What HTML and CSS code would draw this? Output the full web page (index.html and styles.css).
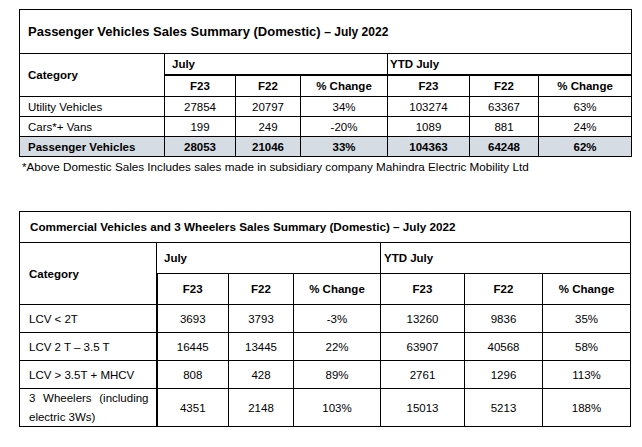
FILE: index.html
```html
<!DOCTYPE html>
<html>
<head>
<meta charset="utf-8">
<link rel="stylesheet" href="styles.css">
</head>
<body>
<div class="page">
  <table class="sales pv">
    <colgroup>
      <col style="width:145px"><col style="width:71px"><col style="width:65px"><col style="width:87px"><col style="width:82px"><col style="width:69px"><col style="width:93px">
    </colgroup>
    <tr class="title-row"><td colspan="7" class="title">Passenger Vehicles Sales Summary (Domestic) <span class="small">– July 2022</span></td></tr>
    <tr class="h1">
      <th rowspan="2" class="cat">Category</th>
      <th colspan="3" class="grp july">July</th>
      <th colspan="3" class="grp ytd">YTD July</th>
    </tr>
    <tr class="h2"><th>F23</th><th>F22</th><th>% Change</th><th>F23</th><th>F22</th><th>% Change</th></tr>
    <tr><td class="name">Utility Vehicles</td><td>27854</td><td>20797</td><td>34%</td><td>103274</td><td>63367</td><td>63%</td></tr>
    <tr><td class="name">Cars*+ Vans</td><td>199</td><td>249</td><td>-20%</td><td>1089</td><td>881</td><td>24%</td></tr>
    <tr class="total"><td class="name">Passenger Vehicles</td><td>28053</td><td>21046</td><td>33%</td><td>104363</td><td>64248</td><td>62%</td></tr>
  </table>
  <p class="note">*Above Domestic Sales Includes sales made in subsidiary company Mahindra Electric Mobility Ltd</p>

  <table class="sales cv">
    <colgroup>
      <col style="width:137px"><col style="width:72px"><col style="width:65px"><col style="width:87px"><col style="width:84px"><col style="width:78px"><col style="width:88px">
    </colgroup>
    <tr class="title-row"><td colspan="7" class="title">Commercial Vehicles and 3 Wheelers Sales Summary (Domestic) – July 2022</td></tr>
    <tr class="h1">
      <th rowspan="2" class="cat">Category</th>
      <th colspan="3" class="grp july">July</th>
      <th colspan="3" class="grp ytd">YTD July</th>
    </tr>
    <tr class="h2"><th class="thick">F23</th><th>F22</th><th>% Change</th><th>F23</th><th>F22</th><th>% Change</th></tr>
    <tr><td class="name">LCV &lt; 2T</td><td class="thick">3693</td><td>3793</td><td>-3%</td><td>13260</td><td>9836</td><td>35%</td></tr>
    <tr><td class="name">LCV 2 T – 3.5 T</td><td class="thick">16445</td><td>13445</td><td>22%</td><td>63907</td><td>40568</td><td>58%</td></tr>
    <tr><td class="name">LCV &gt; 3.5T + MHCV</td><td class="thick">808</td><td>428</td><td>89%</td><td>2761</td><td>1296</td><td>113%</td></tr>
    <tr class="tall"><td class="name wrap">3 Wheelers (including electric 3Ws)</td><td class="thick">4351</td><td>2148</td><td>103%</td><td>15013</td><td>5213</td><td>188%</td></tr>
  </table>
</div>
</body>
</html>
```

FILE: styles.css
```css
html, body {
  margin: 0;
  padding: 0;
  background: #fff;
}
body {
  font-family: "Liberation Sans", Arial, sans-serif;
  color: #000;
}
.page {
  padding: 9px 0 0 19px;
}
.sales {
  border-collapse: collapse;
  table-layout: fixed;
  width: 612px;
  font-size: 11.5px;
}
.sales td, .sales th {
  border: 1px solid #000;
  padding: 0 4px;
  text-align: center;
  vertical-align: middle;
  line-height: 14px;
  white-space: nowrap;
}
.sales th {
  font-weight: bold;
}
.sales .title {
  text-align: left;
  font-weight: bold;
}
.sales .cat, .sales .name {
  text-align: left;
  padding-left: 8px;
}
.sales .grp {
  text-align: left;
}
.sales .july { padding-left: 7px; }
.sales .ytd { padding-left: 2px; }

/* Passenger table */
.pv .title-row td { height: 43px; font-size: 13px; padding-left: 8px; }
.pv .title .small { font-size: 12px; }
.pv tr { height: 20px; }
.pv .h1 th { height: 20px; }
.pv .h1 .grp { border-bottom: 2px solid #000; }
.pv .h2 th { height: 20px; }
.pv .total td { background: #d6dce4; font-weight: bold; }

.note {
  margin: 3px 0 0 3px;
  font-size: 11.7px;
  line-height: 14px;
}

/* Commercial table */
.cv { margin-top: 37px; width: 611px; }
.cv .title-row td { height: 30px; padding-left: 10px; font-size: 11.7px; }
.cv .h1 th { height: 30px; }
.cv .h2 th { height: 30px; }
.cv .cat { padding-left: 9px; }
.cv .july { padding-left: 7px; }
.cv .ytd { padding-left: 3px; }
.cv tr { height: 28px; }
.cv .name { padding-left: 9px; }
.cv .tall { height: 37px; }
.cv .wrap {
  white-space: normal;
  text-align: justify;
  text-align-last: left;
  line-height: 18.5px;
  padding-right: 7px;
}
.cv .thick { border-left: 2px solid #000; }
```
